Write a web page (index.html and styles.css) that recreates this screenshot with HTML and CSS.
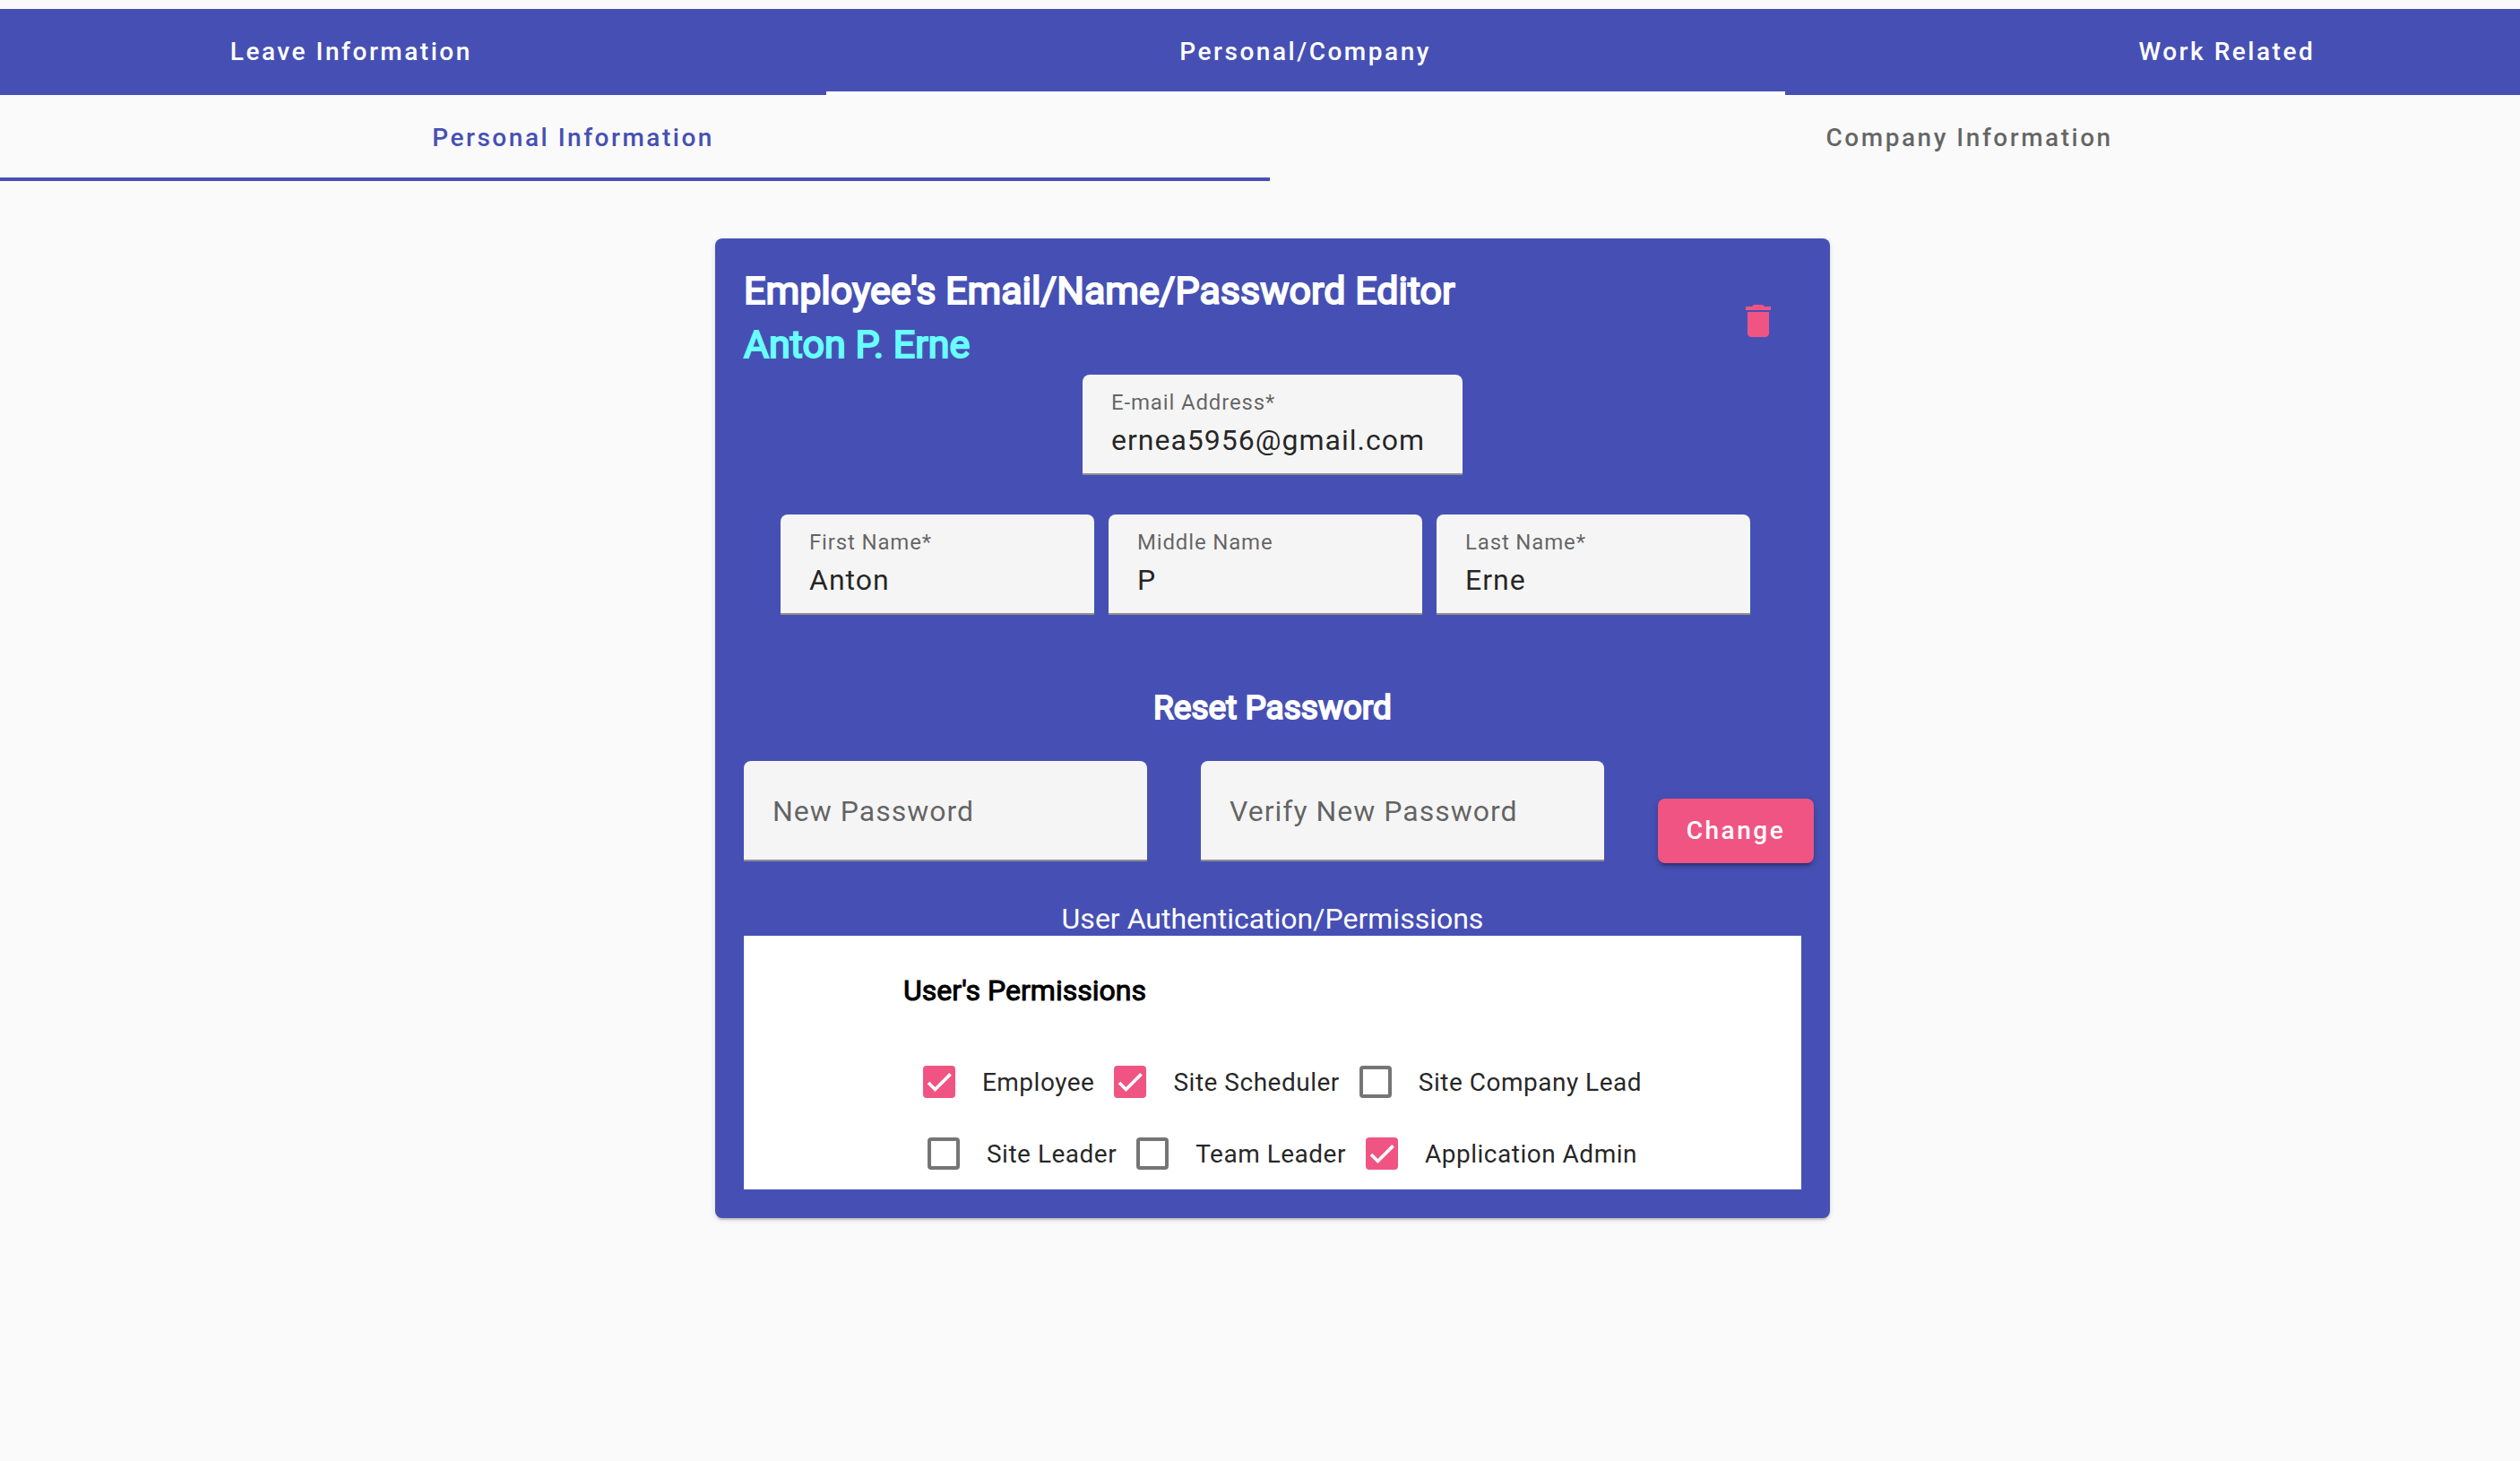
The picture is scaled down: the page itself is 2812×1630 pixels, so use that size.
FILE: index.html
```html
<!DOCTYPE html>
<html lang="en">
<head>
<meta charset="utf-8">
<meta name="viewport" content="width=device-width, initial-scale=1">
<title>Employee Editor</title>
<link rel="stylesheet" href="styles.css">
</head>
<body>
<div class="page">
  <nav class="tabs tabs-primary" role="tablist" aria-label="Employee sections">
    <button class="tab" type="button" role="tab" aria-selected="false">Leave Information</button>
    <button class="tab" type="button" role="tab" aria-selected="true">Personal/Company</button>
    <button class="tab" type="button" role="tab" aria-selected="false">Work Related</button>
  </nav>
  <nav class="tabs tabs-secondary" role="tablist" aria-label="Information type">
    <button class="tab" type="button" role="tab" aria-selected="true">Personal Information</button>
    <button class="tab" type="button" role="tab" aria-selected="false">Company Information</button>
  </nav>
  <main class="content">
    <form class="card">
      <header class="card-header">
        <div class="titles">
          <h1 class="title">Employee's Email/Name/Password Editor</h1>
          <h2 class="title title-name">Anton P. Erne</h2>
        </div>
        <button class="icon-button" type="button" aria-label="Delete employee">
          <svg class="icon" viewBox="0 0 24 24" aria-hidden="true"><path d="M6 19c0 1.1.9 2 2 2h8c1.1 0 2-.9 2-2V7H6v12zM19 4h-3.500l-1-1h-5l-1 1H5v2h14V4z"/></svg>
        </button>
      </header>

      <div class="field field-email">
        <label for="email">E-mail Address*</label>
        <input id="email" type="text" value="ernea5956@gmail.com">
      </div>

      <div class="names">
        <div class="field">
          <label for="first">First Name*</label>
          <input id="first" type="text" value="Anton">
        </div>
        <div class="field">
          <label for="middle">Middle Name</label>
          <input id="middle" type="text" value="P">
        </div>
        <div class="field">
          <label for="last">Last Name*</label>
          <input id="last" type="text" value="Erne">
        </div>
      </div>

      <h3 class="section-title">Reset Password</h3>
      <div class="passwords">
        <div class="field field-empty">
          <label for="password">New Password</label>
          <input id="password" type="password">
        </div>
        <div class="field field-empty">
          <label for="verify">Verify New Password</label>
          <input id="verify" type="password">
        </div>
        <button class="change" type="button">Change</button>
      </div>

      <p class="permissions-caption">User Authentication/Permissions</p>
      <section class="permissions">
        <div class="permissions-body">
          <h4 class="permissions-title">User's Permissions</h4>
          <div class="checks">
            <label class="check"><input type="checkbox" checked><span>Employee</span></label>
            <label class="check"><input type="checkbox" checked><span>Site Scheduler</span></label>
            <label class="check"><input type="checkbox"><span>Site Company Lead</span></label>
          </div>
          <div class="checks">
            <label class="check"><input type="checkbox"><span>Site Leader</span></label>
            <label class="check"><input type="checkbox"><span>Team Leader</span></label>
            <label class="check"><input type="checkbox" checked><span>Application Admin</span></label>
          </div>
        </div>
      </section>
    </form>
  </main>
</div>
</body>
</html>
```
FILE: styles.css
```css
:root {
  --primary: #4650b4;
  --accent: #f05483;
  --bleed-left: 138px;
  --bleed-right: 166px;
}

* {
  box-sizing: border-box;
}

body {
  margin: 0;
  background: #fafafa;
  font-family: Roboto, "Liberation Sans", sans-serif;
  font-size: 32px;
  color: rgba(0, 0, 0, 0.87);
}

h1, h2, h3, h4, p {
  margin: 0;
}

button, input {
  font: inherit;
  color: inherit;
}

/* The sheet is wider than the window on both sides. */
.page {
  padding-top: 10px;
  overflow: hidden;
}

.tabs,
.content {
  margin: 0 calc(-1 * var(--bleed-right)) 0 calc(-1 * var(--bleed-left));
}

.tabs {
  display: flex;
}

.tab {
  flex: 1 1 auto;
  height: 96px;
  padding: 2px 48px 0;
  border: 0;
  border-bottom: 4px solid transparent;
  background: none;
  font-size: 28px;
  font-weight: 500;
  letter-spacing: 0.09em;
  white-space: nowrap;
  color: rgba(0, 0, 0, 0.6);
}

.tabs-primary {
  background: var(--primary);
}

.tabs-primary .tab {
  color: #fff;
}

.tabs-primary .tab[aria-selected="true"] {
  border-bottom-color: #fff;
}

.tabs-secondary .tab[aria-selected="true"] {
  border-bottom-color: var(--primary);
  color: var(--primary);
}

.content {
  display: flex;
  justify-content: center;
  padding: 64px 0;
}

.card {
  width: 1244px;
  padding: 32px;
  border-radius: 8px;
  background: var(--primary);
  box-shadow: 0 4px 2px -2px rgba(0, 0, 0, 0.1), 0 2px 2px rgba(0, 0, 0, 0.07), 0 2px 6px rgba(0, 0, 0, 0.12);
  color: #fff;
}

.card-header {
  display: flex;
  justify-content: space-between;
  align-items: center;
  height: 120px;
}

.titles {
  display: grid;
  gap: 8px;
  padding-bottom: 8px;
}

.title,
.section-title,
.permissions-title {
  font-weight: 400;
  -webkit-text-stroke: 2px currentColor;
}

.title {
  font-size: 43px;
  line-height: 52px;
}

.title-name {
  color: #68fffe;
}

.icon-button {
  display: grid;
  place-items: center;
  width: 96px;
  height: 96px;
  padding: 0;
  border: 0;
  background: none;
  color: var(--accent);
}

.icon {
  width: 48px;
  height: 48px;
  fill: currentColor;
}

.field {
  display: grid;
  height: 112px;
  border-bottom: 2px solid #8f8f8f;
  border-radius: 8px 8px 0 0;
  background: #f5f5f5;
  letter-spacing: 1px;
  color: rgba(0, 0, 0, 0.87);
}

.field label,
.field input {
  grid-area: 1 / 1;
  min-width: 0;
}

.field label {
  margin: 17px 32px 0;
  font-size: 24px;
  line-height: 28px;
  letter-spacing: 0.035em;
  color: rgba(0, 0, 0, 0.6);
  pointer-events: none;
}

.field input {
  width: 100%;
  padding: 55px 32px 19px;
  border: 0;
  background: none;
  line-height: 36px;
  letter-spacing: inherit;
}

.field.field-empty label {
  margin-top: 2px;
  align-self: center;
  font-size: 32px;
  line-height: 36px;
  letter-spacing: 1px;
}

.field-email {
  width: 424px;
  margin: 0 auto 44px;
}

.names {
  display: grid;
  grid-template-columns: repeat(3, 350px);
  gap: 16px;
  justify-content: center;
  padding-right: 16px;
}

.section-title {
  margin: 82px 0 37px;
  font-size: 37px;
  line-height: 44px;
  text-align: center;
}

.passwords {
  display: grid;
  grid-template-columns: 450px 450px 174px;
  gap: 60px;
  height: 115px;
  padding-bottom: 1px;
}

.change {
  align-self: end;
  height: 72px;
  padding: 0 0 2px;
  border: 0;
  border-radius: 8px;
  background: var(--accent);
  box-shadow: 0 6px 2px -4px rgba(0, 0, 0, 0.2), 0 4px 4px rgba(0, 0, 0, 0.14), 0 2px 10px rgba(0, 0, 0, 0.12);
  font-size: 28px;
  font-weight: 500;
  letter-spacing: 0.09em;
}

.permissions-caption {
  margin-top: 42px;
  line-height: 38px;
  text-align: center;
}

.permissions {
  display: flex;
  justify-content: center;
  padding-top: 42px;
  background: #fff;
}

.permissions-title {
  margin-bottom: 43px;
  line-height: 38px;
  color: #000;
  -webkit-text-stroke-width: 1px;
}

.checks {
  display: flex;
  justify-content: center;
}

.check {
  display: flex;
  align-items: center;
  height: 80px;
  padding-left: 22px;
  font-size: 28px;
  letter-spacing: 0.018em;
  color: rgba(0, 0, 0, 0.87);
}

.check input {
  appearance: none;
  width: 36px;
  height: 36px;
  margin: 0 30px 0 0;
  border: 4px solid #757575;
  border-radius: 4px;
}

.check input:checked {
  border-color: var(--accent);
  background: var(--accent) url("data:image/svg+xml,%3Csvg xmlns='http://www.w3.org/2000/svg' viewBox='0 0 24 24'%3E%3Cpath fill='none' stroke='%23fff' stroke-width='3.12' d='M1.730 12.910 8.100 19.280 22.790 4.590'/%3E%3C/svg%3E") center / 28px no-repeat;
}
```
